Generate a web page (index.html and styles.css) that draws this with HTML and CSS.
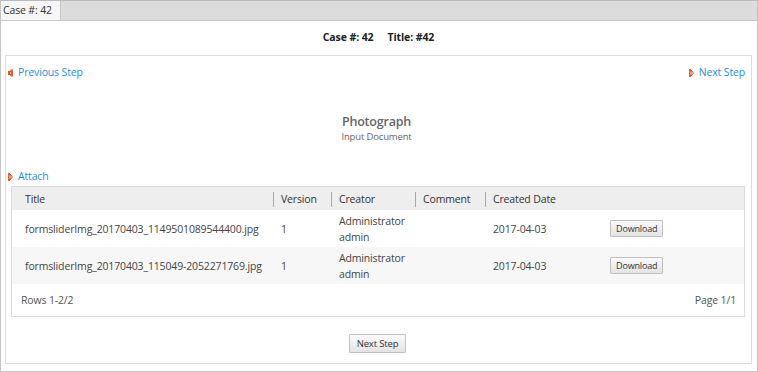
FILE: index.html
```html
<!DOCTYPE html>
<html lang="en">
<head>
    <meta charset="UTF-8">
    <title>Case #: 42</title>
    <link rel="stylesheet" href="styles.css">
</head>
<body>
    <div class="frame">
        <div class="tabs">
            <div class="tab">Case #: 42</div>
        </div>

        <div class="panel">
            <div class="case-head">
                <span>Case #: 42</span>
                <span class="case-title">Title: #42</span>
            </div>

            <div class="step-box">
                <div class="step-nav">
                    <a class="link" href="#">
                        <svg class="arrow" width="6" height="8" viewBox="0 0 6 8">
                            <rect x="3" y="0" width="2" height="1" fill="#f0a27c"/>
                            <rect x="2" y="1" width="3" height="1" fill="#e8784e"/>
                            <rect x="0" y="2" width="5" height="2" fill="#e05a2e"/>
                            <rect x="2" y="3" width="1" height="1" fill="#f3b394"/>
                            <rect x="0" y="4" width="5" height="2" fill="#e05a2e"/>
                            <rect x="2" y="4" width="1" height="1" fill="#f3b394"/>
                            <rect x="2" y="6" width="3" height="1" fill="#e8784e"/>
                            <rect x="3" y="7" width="2" height="1" fill="#f0a27c"/>
                        </svg>Previous Step
                    </a>
                    <a class="link" href="#">
                        <svg class="arrow" width="6" height="8" viewBox="0 0 6 8">
                            <rect x="0" y="0" width="2" height="1" fill="#e05a2e"/>
                            <rect x="0" y="1" width="3" height="1" fill="#e05a2e"/>
                            <rect x="0" y="2" width="4" height="1" fill="#e8784e"/>
                            <rect x="0" y="3" width="5" height="2" fill="#f0a27c"/>
                            <rect x="0" y="3" width="1" height="2" fill="#e05a2e"/>
                            <rect x="0" y="5" width="4" height="1" fill="#e8784e"/>
                            <rect x="0" y="6" width="3" height="1" fill="#e05a2e"/>
                            <rect x="0" y="7" width="2" height="1" fill="#e05a2e"/>
                        </svg>Next Step
                    </a>
                </div>

                <div class="step-title">
                    <div class="step-name">Photograph</div>
                    <div class="step-type">Input Document</div>
                </div>

                <a class="link attach" href="#">
                    <svg class="arrow" width="6" height="8" viewBox="0 0 6 8">
                        <rect x="0" y="0" width="2" height="1" fill="#e05a2e"/>
                        <rect x="0" y="1" width="3" height="1" fill="#e05a2e"/>
                        <rect x="0" y="2" width="4" height="1" fill="#e8784e"/>
                        <rect x="0" y="3" width="5" height="2" fill="#f0a27c"/>
                        <rect x="0" y="3" width="1" height="2" fill="#e05a2e"/>
                        <rect x="0" y="5" width="4" height="1" fill="#e8784e"/>
                        <rect x="0" y="6" width="3" height="1" fill="#e05a2e"/>
                        <rect x="0" y="7" width="2" height="1" fill="#e05a2e"/>
                    </svg>Attach
                </a>

                <div class="grid">
                    <table>
                        <colgroup>
                            <col class="c-title">
                            <col class="c-version">
                            <col class="c-creator">
                            <col class="c-comment">
                            <col class="c-date">
                            <col>
                        </colgroup>
                        <thead>
                            <tr>
                                <th class="first">Title</th>
                                <th><div class="sep">Version</div></th>
                                <th><div class="sep">Creator</div></th>
                                <th><div class="sep">Comment</div></th>
                                <th><div class="sep">Created Date</div></th>
                                <th></th>
                            </tr>
                        </thead>
                        <tbody>
                            <tr>
                                <td class="first">formsliderImg_20170403_1149501089544400.jpg</td>
                                <td>1</td>
                                <td>Administrator<br>admin</td>
                                <td></td>
                                <td>2017-04-03</td>
                                <td><button class="btn small">Download</button></td>
                            </tr>
                            <tr class="alt">
                                <td class="first">formsliderImg_20170403_115049-2052271769.jpg</td>
                                <td>1</td>
                                <td>Administrator<br>admin</td>
                                <td></td>
                                <td>2017-04-03</td>
                                <td><button class="btn small">Download</button></td>
                            </tr>
                        </tbody>
                    </table>
                    <div class="grid-foot">
                        <span>Rows 1-2/2</span>
                        <span>Page 1/1</span>
                    </div>
                </div>

                <div class="actions">
                    <button class="btn">Next Step</button>
                </div>
            </div>
        </div>
    </div>
</body>
</html>
```

FILE: styles.css
```css
* {
    margin: 0;
    padding: 0;
    box-sizing: border-box;
}

body {
    font-family: "Open Sans", "Liberation Sans", sans-serif;
    font-size: 10.5px;
    letter-spacing: -0.15px;
    color: #444;
    background: #fff;
}

.frame {
    width: 758px;
    height: 372px;
    border: 1px solid #c4c4c4;
    border-top-color: #bbb;
}

.tabs {
    display: flex;
    height: 20px;
    background: #dcdcdc;
    border-bottom: 1px solid #c8c8c8;
}

.tab {
    padding: 0 8px 0 2px;
    line-height: 19px;
    background: #f6f6f6;
    color: #333;
    border-right: 1px solid #c8c8c8;
}

.panel {
    padding: 0 5px 0 4px;
}

.case-head {
    display: flex;
    justify-content: center;
    gap: 14px;
    padding: 8px 0 10px;
    line-height: 16px;
    font-weight: bold;
    letter-spacing: -0.1px;
    color: #222;
}

.step-box {
    border: 1px solid #dcdcdc;
    height: 309px;
    padding: 8px 6px 0 2px;
}

.step-nav {
    display: flex;
    justify-content: space-between;
    line-height: 16px;
}

.link {
    color: #1d90d8;
    text-decoration: none;
    line-height: 16px;
}

.arrow {
    margin-right: 4px;
    vertical-align: -1px;
}

.step-title {
    margin-top: 34px;
    text-align: center;
    color: #666;
}

.step-name {
    font-size: 12.5px;
    font-weight: 600;
    line-height: 16px;
    letter-spacing: -0.2px;
}

.step-type {
    font-size: 9.5px;
    line-height: 12px;
    margin-top: 1px;
}

.attach {
    display: block;
    margin-top: 25px;
}

.grid {
    margin: 2px 0 0 3px;
    border: 1px solid #dcdcdc;
}

table {
    width: 100%;
    border-collapse: collapse;
    table-layout: fixed;
}

.c-title { width: 261px; }
.c-version { width: 58px; }
.c-creator { width: 84px; }
.c-comment { width: 70px; }
.c-date { width: 117px; }

th {
    height: 23px;
    padding: 1px 0 0;
    background: #eee;
    color: #333;
    font-weight: normal;
    text-align: left;
}

th .sep {
    border-left: 1px solid #a8a8a8;
    padding-left: 7px;
    line-height: 15px;
}

td {
    height: 37px;
    padding: 0 0 0 8px;
    line-height: 16px;
    color: #444;
    white-space: nowrap;
}

th.first,
td.first {
    padding-left: 13px;
}

tr.alt td {
    background: #f7f7f7;
}

.grid-foot {
    display: flex;
    justify-content: space-between;
    height: 32px;
    align-items: center;
    padding: 0 8px 0 9px;
    color: #555;
}

.btn {
    font-family: "Open Sans", "Liberation Sans", sans-serif;
    font-size: 9.5px;
    letter-spacing: -0.15px;
    color: #333;
    height: 19px;
    padding: 0 7px;
    border: 1px solid #c0c0c0;
    border-radius: 1px;
    background: linear-gradient(#fafafa, #e4e4e4);
}

.btn.small {
    font-size: 9px;
    height: 17px;
    padding: 0 5px;
}

.actions {
    display: flex;
    justify-content: center;
    margin-top: 17px;
    padding-left: 2px;
}
```
